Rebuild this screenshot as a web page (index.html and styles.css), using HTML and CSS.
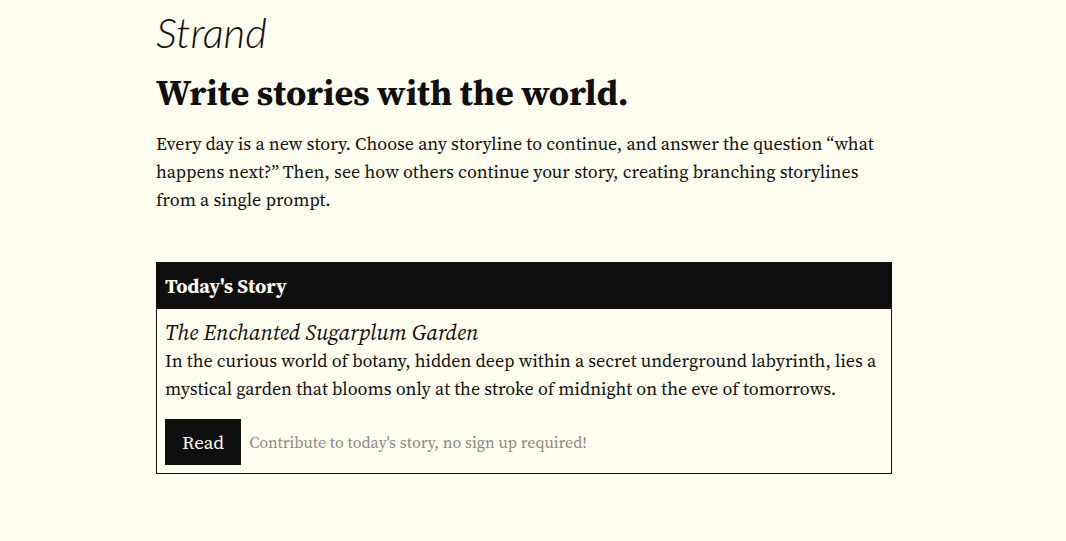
FILE: index.html
```html
<!DOCTYPE html>
<html lang="en">
<head>
<meta charset="utf-8">
<meta name="viewport" content="width=device-width, initial-scale=1">
<title>Strand</title>
<link rel="stylesheet" href="styles.css">
</head>
<body>
<div class="page">
  <header class="brand">Strand</header>
  <main>
    <h1 class="headline">Write stories with the world.</h1>
    <p class="intro">Every day is a new story. Choose any storyline to continue, and answer the question “what happens next?” Then, see how others continue your story, creating branching storylines from a single prompt.</p>
    <section class="card">
      <h2 class="card-header">Today's Story</h2>
      <div class="card-body">
        <h3 class="story-title">The Enchanted Sugarplum Garden</h3>
        <p class="story-text">In the curious world of botany, hidden deep within a secret underground labyrinth, lies a mystical garden that blooms only at the stroke of midnight on the eve of tomorrows.</p>
        <div class="actions">
          <button class="read" type="button">Read</button>
          <span class="note">Contribute to today's story, no sign up required!</span>
        </div>
      </div>
    </section>
  </main>
</div>
</body>
</html>
```
FILE: styles.css
```css
* {
  box-sizing: border-box;
}

body {
  margin: 0;
  padding-right: 18px;
  background: #fffdf0;
  color: #0f0f0f;
  font-family: "Source Serif 4", "Source Serif Pro", "Liberation Serif", serif;
  font-size: 18px;
  line-height: 28px;
}

h1,
h2,
h3,
p {
  margin: 0;
}

.page {
  max-width: 768px;
  margin: 0 auto;
  padding: 8px 16px 48px;
}

.brand {
  font-family: Lato, sans-serif;
  font-size: 42px;
  font-style: italic;
  font-weight: 300;
  line-height: 48px;
}

.headline {
  margin-top: 16px;
  font-size: 36px;
  font-weight: 700;
  line-height: 42px;
}

.intro {
  margin-top: 16px;
}

.card {
  margin-top: 48px;
  border: 1px solid #0f0f0f;
}

.card-header {
  padding: 8px;
  background: #0f0f0f;
  color: #fffdf0;
  font-size: 20px;
  font-weight: 700;
  line-height: 30px;
}

.card-body {
  padding: 8px;
}

.story-title {
  font-size: 22px;
  font-style: italic;
  font-weight: 400;
  line-height: 30px;
}

.actions {
  display: flex;
  flex-wrap: wrap;
  align-items: center;
  gap: 8px;
  margin-top: 16px;
}

.read {
  padding: 8px 16px;
  border: 1px solid #0f0f0f;
  border-radius: 0;
  background: #0f0f0f;
  color: #fffdf0;
  font: inherit;
  font-size: 19px;
}

.note {
  color: #8c8a84;
  font-size: 16px;
}
```
